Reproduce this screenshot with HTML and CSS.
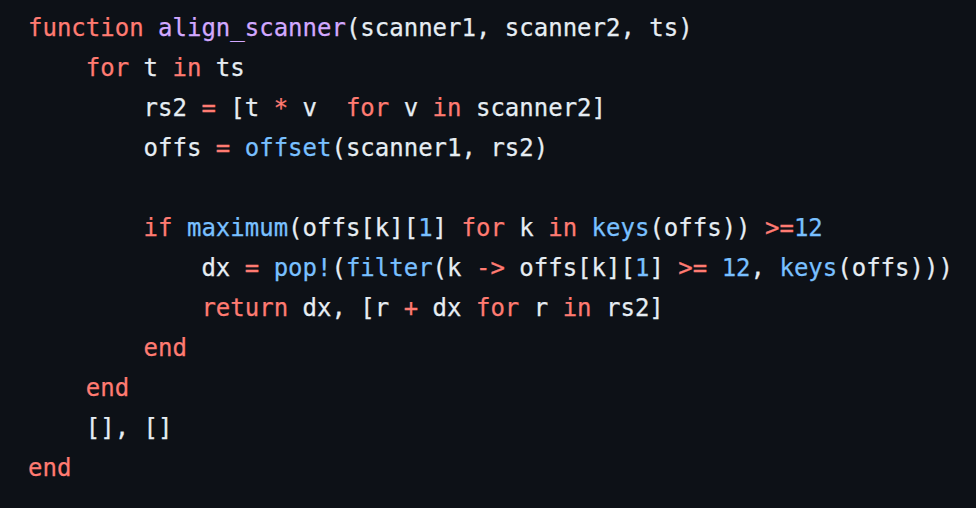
FILE: index.html
```html
<!DOCTYPE html>
<html>
<head>
<meta charset="utf-8">
<link rel="stylesheet" href="styles.css">
</head>
<body>
<pre class="code"><code><span class="k">function</span> <span class="fn">align_scanner</span>(scanner1, scanner2, ts)
    <span class="k">for</span> t <span class="k">in</span> ts
        rs2 <span class="k">=</span> [t <span class="k">*</span> v  <span class="k">for</span> v <span class="k">in</span> scanner2]
        offs <span class="k">=</span> <span class="b">offset</span>(scanner1, rs2)

        <span class="k">if</span> <span class="b">maximum</span>(offs[k][<span class="b">1</span>] <span class="k">for</span> k <span class="k">in</span> <span class="b">keys</span>(offs)) <span class="k">&gt;=</span><span class="b">12</span>
            dx <span class="k">=</span> <span class="b">pop!</span>(<span class="b">filter</span>(k <span class="k">-&gt;</span> offs[k][<span class="b">1</span>] <span class="k">&gt;=</span> <span class="b">12</span>, <span class="b">keys</span>(offs)))
            <span class="k">return</span> dx, [r <span class="k">+</span> dx <span class="k">for</span> r <span class="k">in</span> rs2]
        <span class="k">end</span>
    <span class="k">end</span>
    [], []
<span class="k">end</span></code></pre>
</body>
</html>
```

FILE: styles.css
```css
html, body {
  margin: 0;
  padding: 0;
  background: #0d1117;
}
body {
  width: 976px;
  height: 508px;
  overflow: hidden;
}
.code {
  margin: 0;
  padding: 8px 0 0 28px;
  font-family: "DejaVu Sans Mono", "Liberation Mono", monospace;
  font-size: 24px;
  line-height: 40px;
  color: #e6edf3;
  white-space: pre;
  -webkit-text-stroke: 0.25px currentColor;
}
.k { color: #ff7b72; }
.fn { color: #d2a8ff; }
.b { color: #79c0ff; }
```
